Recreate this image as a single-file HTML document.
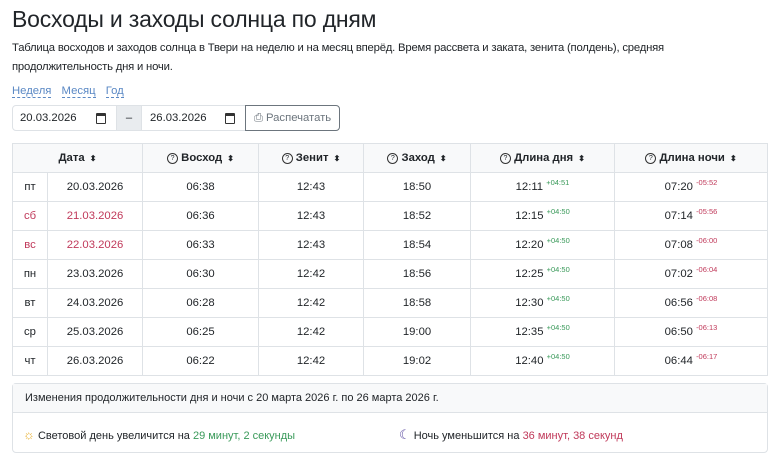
<!DOCTYPE html>
<html><head><meta charset="utf-8"><style>
body{margin:0;background:#fff;font-family:"Liberation Sans",sans-serif;color:#212529;width:768px;height:453px;overflow:hidden;position:relative}
h1{position:absolute;left:12px;top:6px;margin:0;font-size:23px;font-weight:normal;letter-spacing:-0.2px}
.desc{position:absolute;left:12px;top:39px;font-size:11.3px;line-height:19px;width:700px;letter-spacing:-0.2px}
.tabs{position:absolute;left:12px;top:85px;font-size:11.3px;color:#5a88c4}
.tabs span{border-bottom:1px dashed #5a88c4;margin-right:7px}
.ig{position:absolute;left:12px;top:105px;height:26px;display:flex;font-size:11.3px}
.ig div{border:1px solid #dee2e6;display:flex;align-items:center;box-sizing:border-box;height:26px}
.cal{display:inline-block;width:8px;height:7px;border:1.5px solid #333;border-top-width:3px;border-radius:1px}
table{position:absolute;left:12px;top:143px;width:756px;border-collapse:collapse;font-size:11.3px;table-layout:fixed}
td,th{border:1px solid #dee2e6;text-align:center;height:28px;padding:0}
th{background:#f8f9fa;font-weight:bold;height:28px}
.q{display:inline-block;width:9px;height:9px;border:1px solid #333;border-radius:50%;font-size:7px;line-height:9px;font-weight:normal;vertical-align:1px}
.s{font-size:8px;margin-left:2px}
sup{font-size:7.5px;vertical-align:0;position:relative;top:-5px}
.g{color:#3a9a5a}.r{color:#c0395a}
.card{position:absolute;left:12px;top:383px;width:756px;height:70px;border:1px solid #dee2e6;border-radius:4px;box-sizing:border-box;font-size:11px}
.ch{background:#f8f9fa;height:28px;line-height:28px;padding-left:12px;border-bottom:1px solid #dee2e6}
</style></head><body>
<h1>Восходы и заходы солнца по дням</h1>
<div class="desc">Таблица восходов и заходов солнца в Твери на неделю и на месяц вперёд. Время рассвета и заката, зенита (полдень), средняя продолжительность дня и ночи.</div>
<div class="tabs"><span>Неделя</span> <span>Месяц</span> <span>Год</span></div>
<div class="ig">
<div style="width:105px;padding-left:7px;border-radius:4px 0 0 4px;justify-content:space-between;padding-right:10px">20.03.2026 <i class="cal"></i></div>
<div style="width:24px;background:#e9ecef;justify-content:center;border-left:0;border-right:0">–</div>
<div style="width:105px;padding-left:8px;justify-content:space-between;padding-right:10px">26.03.2026 <i class="cal"></i></div>
<div style="width:95px;border:1px solid #6c757d;border-radius:0 4px 4px 0;justify-content:center;color:#6c757d;margin-left:-1px">⎙ Распечатать</div>
</div>
<table>
<colgroup><col style="width:35px"><col style="width:95px"><col style="width:116px"><col style="width:105px"><col style="width:107px"><col style="width:144px"><col></colgroup>
<tr><th colspan="2">Дата <span class="s">⬍</span></th><th><span class="q">?</span> Восход <span class="s">⬍</span></th><th><span class="q">?</span> Зенит <span class="s">⬍</span></th><th><span class="q">?</span> Заход <span class="s">⬍</span></th><th><span class="q">?</span> Длина дня <span class="s">⬍</span></th><th><span class="q">?</span> Длина ночи <span class="s">⬍</span></th></tr>
<tr><td>пт</td><td>20.03.2026</td><td>06:38</td><td>12:43</td><td>18:50</td><td>12:11 <sup class="g">+04:51</sup></td><td>07:20 <sup class="r">-05:52</sup></td></tr>
<tr><td class="r">сб</td><td class="r">21.03.2026</td><td>06:36</td><td>12:43</td><td>18:52</td><td>12:15 <sup class="g">+04:50</sup></td><td>07:14 <sup class="r">-05:56</sup></td></tr>
<tr><td class="r">вс</td><td class="r">22.03.2026</td><td>06:33</td><td>12:43</td><td>18:54</td><td>12:20 <sup class="g">+04:50</sup></td><td>07:08 <sup class="r">-06:00</sup></td></tr>
<tr><td>пн</td><td>23.03.2026</td><td>06:30</td><td>12:42</td><td>18:56</td><td>12:25 <sup class="g">+04:50</sup></td><td>07:02 <sup class="r">-06:04</sup></td></tr>
<tr><td>вт</td><td>24.03.2026</td><td>06:28</td><td>12:42</td><td>18:58</td><td>12:30 <sup class="g">+04:50</sup></td><td>06:56 <sup class="r">-06:08</sup></td></tr>
<tr><td>ср</td><td>25.03.2026</td><td>06:25</td><td>12:42</td><td>19:00</td><td>12:35 <sup class="g">+04:50</sup></td><td>06:50 <sup class="r">-06:13</sup></td></tr>
<tr><td>чт</td><td>26.03.2026</td><td>06:22</td><td>12:42</td><td>19:02</td><td>12:40 <sup class="g">+04:50</sup></td><td>06:44 <sup class="r">-06:17</sup></td></tr>
</table>
<div class="card">
<div class="ch">Изменения продолжительности дня и ночи с 20 марта 2026 г. по 26 марта 2026 г.</div>
<div style="position:absolute;left:10px;top:43px"><span style="color:#e8b030;font-size:13px">☼</span> Световой день увеличится на <span class="g">29 минут, 2 секунды</span></div>
<div style="position:absolute;left:386px;top:43px"><span style="color:#5a4aa0;font-size:13px">☾</span> Ночь уменьшится на <span class="r">36 минут, 38 секунд</span></div>
</div>
</body></html>
